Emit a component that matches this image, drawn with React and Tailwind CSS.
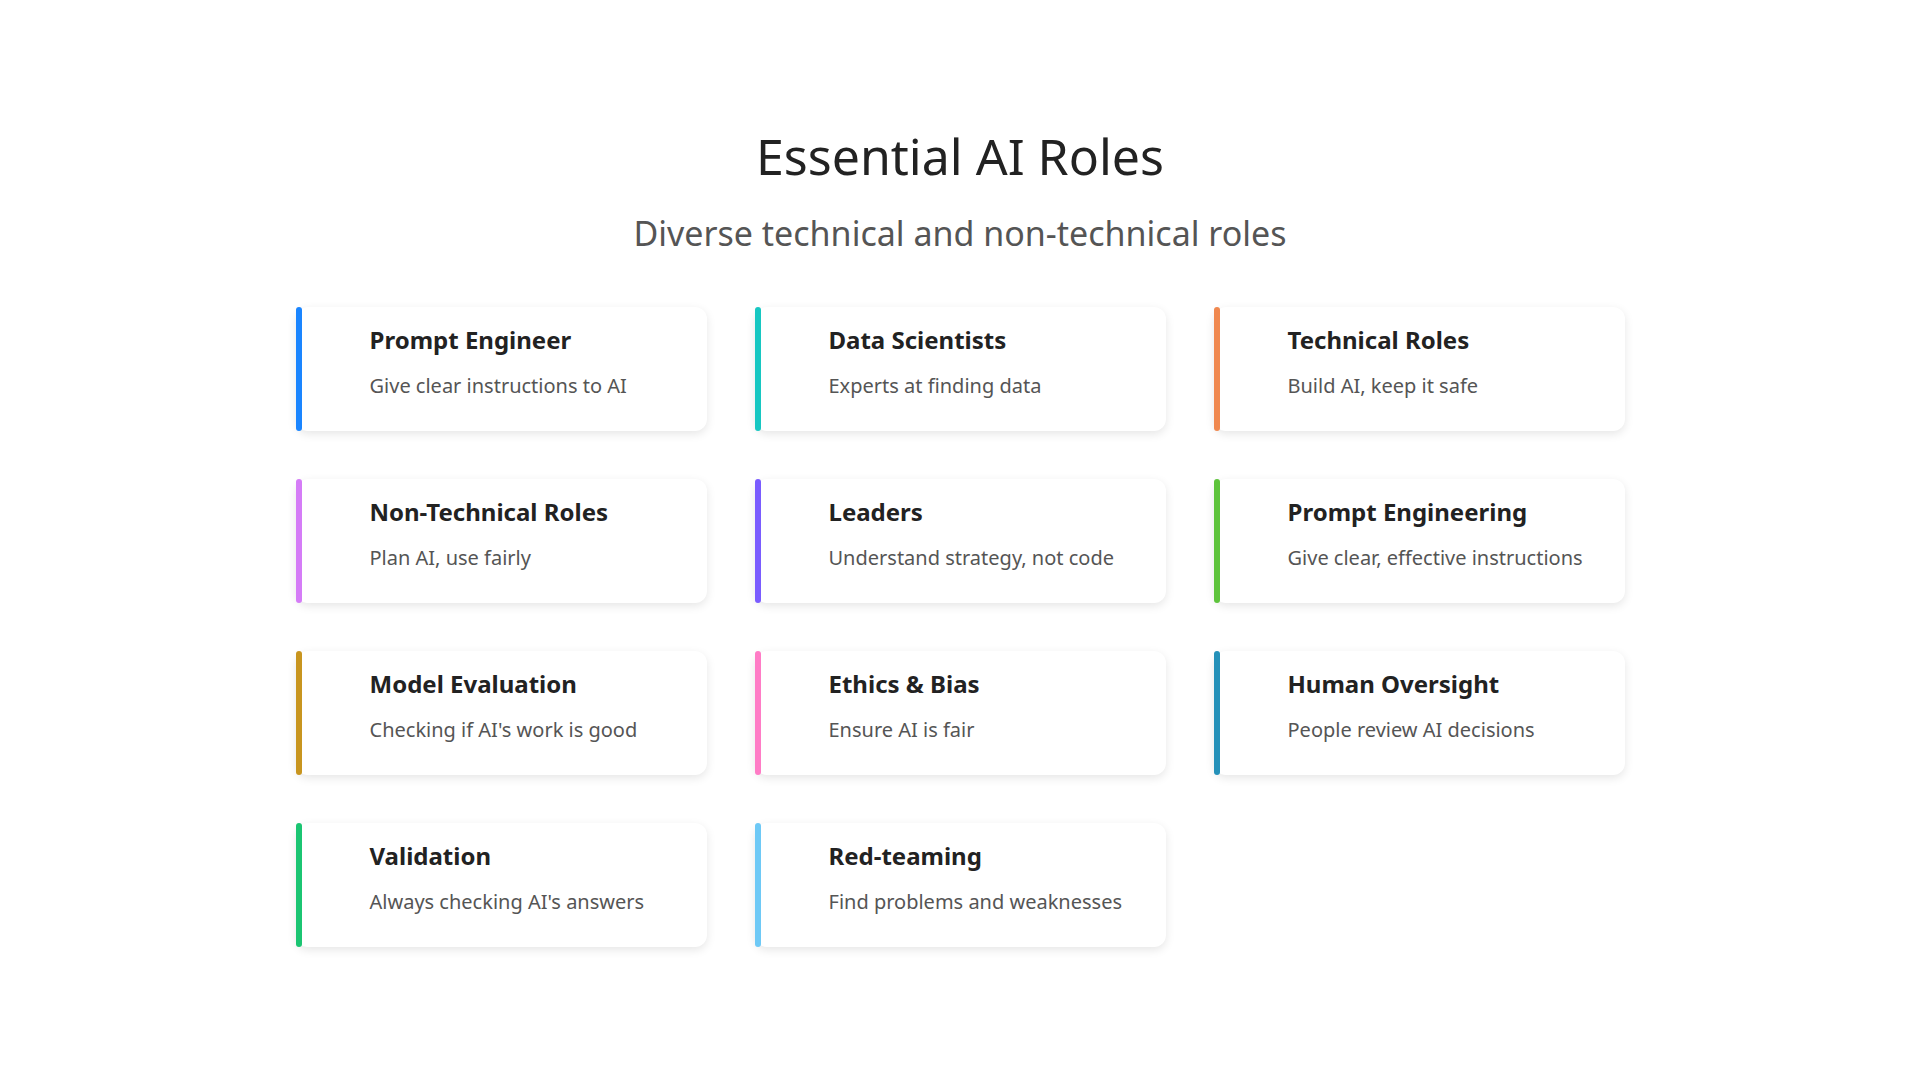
const cards = [
  ["Prompt Engineer", "Give clear instructions to AI", "bg-[#1a85ff]"],
  ["Data Scientists", "Experts at finding data", "bg-[#17c7c2]"],
  ["Technical Roles", "Build AI, keep it safe", "bg-[#f0884f]"],
  ["Non-Technical Roles", "Plan AI, use fairly", "bg-[#d57cf7]"],
  ["Leaders", "Understand strategy, not code", "bg-[#7a5cff]"],
  ["Prompt Engineering", "Give clear, effective instructions", "bg-[#5ec43c]"],
  ["Model Evaluation", "Checking if AI's work is good", "bg-[#c8951f]"],
  ["Ethics & Bias", "Ensure AI is fair", "bg-[#ff7cc6]"],
  ["Human Oversight", "People review AI decisions", "bg-[#2591b9]"],
  ["Validation", "Always checking AI's answers", "bg-[#1bc572]"],
  ["Red-teaming", "Find problems and weaknesses", "bg-[#6ec9f6]"],
];
export default function App() {
  return (
    <div className="w-[1920px] h-[1080px] bg-white flex flex-col items-center" style={{ fontFamily: '"Noto Sans", sans-serif' }}>
      <h1 className="mt-[124px] text-[50px] leading-[64px] text-[#222]">Essential AI Roles</h1>
      <p className="mt-[22px] text-[34px] leading-[46px] text-[#555]">Diverse technical and non-technical roles</p>
      <div className="mt-[51px] grid grid-cols-[411px_411px_411px] gap-x-[48px] gap-y-[48px]">
        {cards.map(([t, d, c]) => (
          <div key={t} className="relative h-[124px] bg-white rounded-[12px] shadow-[0_3px_10px_rgba(0,0,0,0.10)] pl-[74px] pt-[17px]">
            <div className={`absolute left-0 top-0 bottom-0 w-[6px] rounded-[3px] ${c}`} />
            <div className="text-[24px] leading-[32px] font-bold text-[#222]">{t}</div>
            <div className="mt-[16px] text-[20px] leading-[28px] text-[#555]">{d}</div>
          </div>
        ))}
      </div>
    </div>
  );
}
